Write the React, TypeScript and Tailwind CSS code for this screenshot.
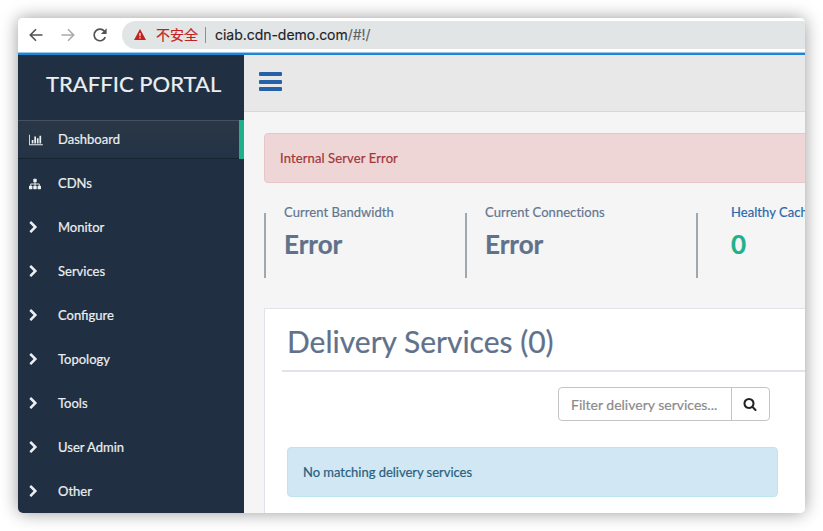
import React from "react";

const CHEVRON =
  "M1363 877l-742 742q-19 19-45 19t-45-19l-166-166q-19-19-19-45t19-45l531-531-531-531q-19-19-19-45t19-45l166-166q19-19 45-19t45 19l742 742q19 19 19 45t-19 45z";
const SEARCH =
  "M1216 832q0-185-131.5-316.5t-316.5-131.5-316.5 131.5-131.5 316.5 131.5 316.5 316.5 131.5 316.5-131.5 131.5-316.5zm512 832q0 52-38 90t-90 38q-54 0-90-38l-343-342q-179 124-399 124-143 0-273.5-55.5t-225-150-150-225-55.5-273.5 55.5-273.5 150-225 225-150 273.5-55.5 273.5 55.5 225 150 150 225 55.5 273.5q0 220-124 399l343 343q37 37 37 90z";
const SITEMAP =
  "M1792 1248v320q0 40-28 68t-68 28h-320q-40 0-68-28t-28-68v-320q0-40 28-68t68-28h96v-192h-512v192h96q40 0 68 28t28 68v320q0 40-28 68t-68 28h-320q-40 0-68-28t-28-68v-320q0-40 28-68t68-28h96v-192h-512v192h96q40 0 68 28t28 68v320q0 40-28 68t-68 28h-320q-40 0-68-28t-28-68v-320q0-40 28-68t68-28h96v-192q0-52 38-90t90-38h512v-192h-96q-40 0-68-28t-28-68v-320q0-40 28-68t68-28h320q40 0 68 28t28 68v320q0 40-28 68t-68 28h-96v192h512q52 0 90 38t38 90v192h96q40 0 68 28t28 68z";
const BAR_CHART =
  "M640 896v512h-256v-512h256zm384-512v1024h-256v-1024h256zm1024 1152v128h-2048v-1536h128v1408h1920zm-640-896v768h-256v-768h256zm384-384v1152h-256v-1152h256z";

function Glyph({ d, className, box = "0 0 1792 1792" }: { d: string; className: string; box?: string }) {
  return (
    <svg viewBox={box} className={className} fill="currentColor">
      <path d={d} />
    </svg>
  );
}

const sections = ["Monitor", "Services", "Configure", "Topology", "Tools", "User Admin", "Other"];

function BrowserBar() {
  return (
    <div className="flex h-[34px] shrink-0 items-center bg-white pl-[11px] pb-[1px]">
      <svg viewBox="0 0 14 14" className="h-[14px] w-[14px] text-[#505357]" fill="none" stroke="currentColor" strokeWidth="1.6">
        <path d="M13.5 7H1.5M7 1.3L1.3 7L7 12.7" />
      </svg>
      <svg viewBox="0 0 14 14" className="ml-[18px] h-[14px] w-[14px] text-[#a9abad]" fill="none" stroke="currentColor" strokeWidth="1.6">
        <path d="M0.5 7H12.5M7 1.3L12.7 7L7 12.7" />
      </svg>
      <svg viewBox="0 0 16 16" className="ml-[17px] h-4 w-4 text-[#505357]" fill="none">
        <path d="M13.3 10.2A5.8 5.8 0 1 1 12.4 4.2" stroke="currentColor" strokeWidth="1.7" />
        <path d="M14.6 1.3V7H8.9Z" fill="currentColor" />
      </svg>
      <div className="ml-[14px] flex h-7 flex-1 items-center rounded-l-full bg-[#e1e5e6] pl-[12px]">
        <svg viewBox="0 0 12 11" className="h-[11px] w-[12px] shrink-0">
          <path d="M6 0L12 11H0Z" fill="#c5221f" />
          <path d="M5.4 3.9H6.6V7.2H5.4ZM5.4 8.2H6.6V9.4H5.4Z" fill="#fff" />
        </svg>
        <span className="ml-[10px] pb-[2px] font-['Noto_Sans_CJK_SC',sans-serif] text-[14px] leading-5 text-[#c5221f]">不安全</span>
        <span className="ml-[7px] h-4 w-px bg-[#8c9092]" />
        <span className="ml-[9px] font-[Inter,sans-serif] text-[14px] leading-5 tracking-[-0.03px] text-[#202124] [-webkit-text-stroke:0.15px]">
          ciab.cdn-demo.com<span className="text-[#5f6368]">/#!/</span>
        </span>
      </div>
    </div>
  );
}

function Sidebar() {
  return (
    <nav className="flex w-[226px] shrink-0 flex-col bg-[#212f42] text-[#eceff1]">
      <div className="flex h-[65px] items-center pl-[28px] pb-[8px] text-[22px] leading-[30px] tracking-[0.04px]">TRAFFIC PORTAL</div>
      <div className="flex h-[39px] shrink-0 items-center border-r-[5px] border-[#1fb18a] bg-gradient-to-b from-[#2a3745] to-[#233346] pl-[11px] text-[13px] shadow-[inset_0_1px_0_#435160,inset_0_-1px_0_#182332]">
        <div className="w-[29px]">
          <Glyph d={BAR_CHART} box="0 0 2048 1792" className="h-[12px] w-[14px]" />
        </div>
        Dashboard
      </div>
      <div className="mt-[6px] flex h-[38px] shrink-0 items-center pl-[11px] text-[13px]">
        <div className="w-[29px]">
          <Glyph d={SITEMAP} className="h-[12px] w-[12px]" />
        </div>
        CDNs
      </div>
      {sections.map((name) => (
        <div key={name} className="mt-[6px] flex h-[38px] shrink-0 items-center pl-[9px] text-[13px]">
          <div className="w-[31px] pb-[2px]">
            <Glyph d={CHEVRON} className="h-[13px] w-[13px]" />
          </div>
          {name}
        </div>
      ))}
    </nav>
  );
}

function Tile({ label, value, width, link }: { label: string; value: string; width: string; link?: boolean }) {
  return (
    <div className={`flex shrink-0 ${width}`}>
      <div className="mt-[10px] h-[65px] w-[2px] shrink-0 bg-[#9fa8af]" />
      <div className={link ? "pl-[33px]" : "pl-[18px]"}>
        <div className={`whitespace-nowrap text-[13px] leading-[18px] tracking-[0.06px] ${link ? "text-[#2a67ac]" : "text-[#63758f]"}`}>{label}</div>
        <div className={`mt-[5px] text-[26px] font-bold leading-[36px] ${link ? "text-[#1fb18a]" : "text-[#60718b]"}`}>{value}</div>
      </div>
    </div>
  );
}

export default function App() {
  return (
    <div className="h-[531px] w-[823px] overflow-hidden bg-white p-[18px] font-[Lato,sans-serif] [-webkit-text-stroke:0.2px]">
      <div className="flex h-[495px] w-[787px] flex-col overflow-hidden rounded-[5px] shadow-[0_0_17px_rgba(0,0,0,0.4)]">
        <BrowserBar />
        <div className="h-[3px] shrink-0 border-t border-[#9cc6e6] bg-[#1c87d6]" />
        <div className="flex min-h-0 flex-1">
          <Sidebar />
          <main className="flex min-w-0 flex-1 flex-col overflow-hidden bg-[#f5f5f5]">
            <div className="h-[57px] shrink-0 border-b border-[#d5d8dd] bg-[#e8e8e8] pl-[15px] pt-[17px]">
              <div className="flex w-[23px] flex-col gap-[3.5px]">
                <span className="h-1 rounded-[1px] bg-[#2661a8]" />
                <span className="h-1 rounded-[1px] bg-[#2661a8]" />
                <span className="h-1 rounded-[1px] bg-[#2661a8]" />
              </div>
            </div>
            <div className="ml-5 mt-[21px] flex h-[50px] w-[560px] shrink-0 items-center rounded-[4px] border border-[#e9c4cb] bg-[#eed6d6] pl-[15px] pt-[2px] text-[13px] tracking-[0.12px] text-[#a23538]">
              Internal Server Error
            </div>
            <div className="ml-5 mt-5 flex h-[75px] shrink-0">
              <Tile label="Current Bandwidth" value="Error" width="w-[201px]" />
              <Tile label="Current Connections" value="Error" width="w-[231px]" />
              <Tile label="Healthy Caches" value="0" width="w-[201px]" link />
            </div>
            <section className="ml-5 mt-[30px] flex w-[560px] flex-1 flex-col border-l border-t border-[#e0e4ea] bg-white pl-[17px]">
              <h2 className="h-[63px] shrink-0 border-b-2 border-[#e0e4ea] pl-[5px] pt-[11px] text-[30px] leading-[42px] text-[#60718b]">
                Delivery Services (0)
              </h2>
              <div className="ml-[276px] mt-[15px] flex h-[34px] w-[212px] shrink-0 rounded-[4px] border border-[#c4c4c4] text-[14px]">
                <div className="flex w-[173px] shrink-0 items-center whitespace-nowrap border-r border-[#c4c4c4] pl-3 text-[#8b8b8b]">
                  Filter delivery services...
                </div>
                <div className="flex flex-1 items-center justify-center pr-px text-[#222]">
                  <Glyph d={SEARCH} className="h-[14px] w-[14px]" />
                </div>
              </div>
              <div className="ml-[5px] mt-[26px] flex h-[50px] w-[491px] shrink-0 items-center rounded-[4px] border border-[#bce5ee] bg-[#d1e8f4] pl-[15px] pt-[2px] text-[13px] tracking-[-0.03px] text-[#286080]">
                No matching delivery services
              </div>
            </section>
          </main>
        </div>
      </div>
    </div>
  );
}
